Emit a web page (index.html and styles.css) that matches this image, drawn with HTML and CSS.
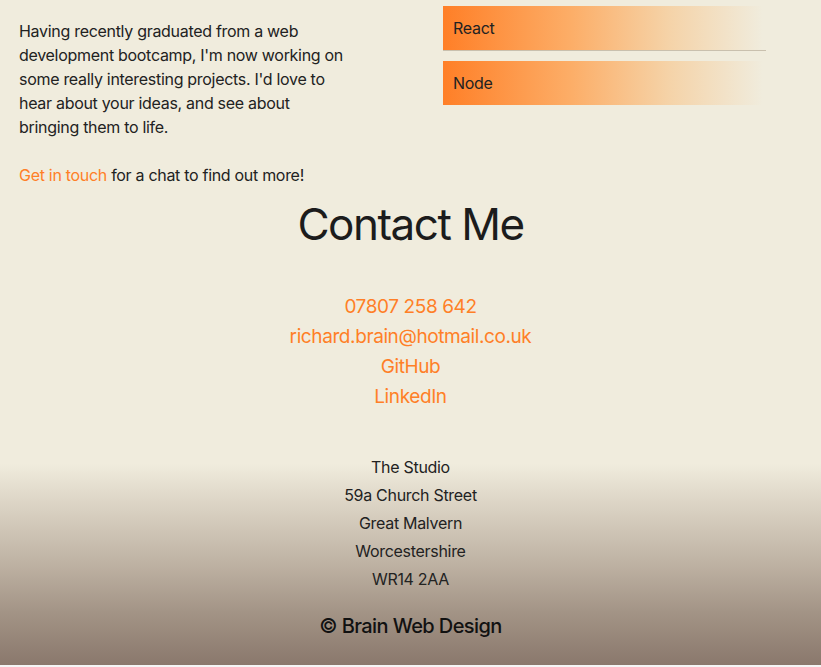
FILE: index.html
```html
<!DOCTYPE html>
<html lang="en">
<head>
<meta charset="utf-8">
<title>Richard Brain</title>
<link rel="stylesheet" href="styles.css">
</head>
<body>
<section class="about">
  <div class="about-text">
    <p>Having recently graduated from a web development bootcamp, I'm now working on some really interesting projects. I'd love to hear about your ideas, and see about bringing them to life.</p>
    <p><a href="#contact" class="link">Get in touch</a> for a chat to find out more!</p>
  </div>
  <div class="skills">
    <div class="skill skill-bordered">React</div>
    <div class="skill">Node</div>
  </div>
</section>
<section class="contact" id="contact">
  <h2 class="contact-title">Contact Me</h2>
  <ul class="contact-links">
    <li><a class="link" href="#">07807 258 642</a></li>
    <li><a class="link" href="#">richard.brain@hotmail.co.uk</a></li>
    <li><a class="link" href="#">GitHub</a></li>
    <li><a class="link" href="#">LinkedIn</a></li>
  </ul>
</section>
<footer class="footer">
  <address class="address">
    <span>The Studio</span>
    <span>59a Church Street</span>
    <span>Great Malvern</span>
    <span>Worcestershire</span>
    <span>WR14 2AA</span>
  </address>
  <p class="copyright">© Brain Web Design</p>
</footer>
</body>
</html>
```
FILE: styles.css
```css
html {
  background: #f5f5f5;
}
body {
  margin: 0;
  background: #f0ecdd;
  font-family: Inter, "Noto Sans", sans-serif;
  color: #222;
  height: 665px;
  display: flex;
  flex-direction: column;
  overflow: hidden;
  letter-spacing: -0.3px;
}
.link {
  color: #ff7f27;
  text-decoration: none;
}
.about {
  display: grid;
  grid-template-columns: 330px 323px;
  column-gap: 94px;
  padding: 6px 0 0 19px;
}
.about-text {
  font-size: 16px;
  line-height: 24px;
  padding-top: 13px;
}
.about-text p {
  margin: 0 0 24px;
}
.about-text p:last-child {
  margin: 0;
}
.skills {
  display: flex;
  flex-direction: column;
  gap: 10px;
}
.skill {
  height: 44px;
  display: flex;
  align-items: center;
  padding-left: 10px;
  font-size: 16px;
  background: linear-gradient(to right, #ff7f27 0%, #fcae68 40%, #f5d3a8 70%, #f0ecdd 99%);
}
.skill-bordered {
  border-bottom: 1px solid #c9c0ae;
}
.contact {
  text-align: center;
}
.contact-title {
  font-size: 44px;
  letter-spacing: -1.5px;
  font-weight: 400;
  margin: 9px 0 40px;
  line-height: 56px;
  color: #1c1c1c;
}
.contact-links {
  list-style: none;
  margin: 0;
  padding: 0;
  font-size: 19px;
  letter-spacing: -0.4px;
  line-height: 30px;
}
.footer {
  flex: 1;
  text-align: center;
  background: linear-gradient(to bottom, #f0ecdd 0px, #f0ecdd 52px, #ddd5c6 90px, #bfb3a4 150px, #a39486 200px, #8a786c 100%);
  padding-top: 41px;
}
.address {
  font-style: normal;
  display: flex;
  flex-direction: column;
  font-size: 16px;
  line-height: 28px;
}
.copyright {
  margin: 21px 0 0;
  font-size: 20px;
  font-weight: 500;
  letter-spacing: -0.6px;
  color: #111;
}
```
